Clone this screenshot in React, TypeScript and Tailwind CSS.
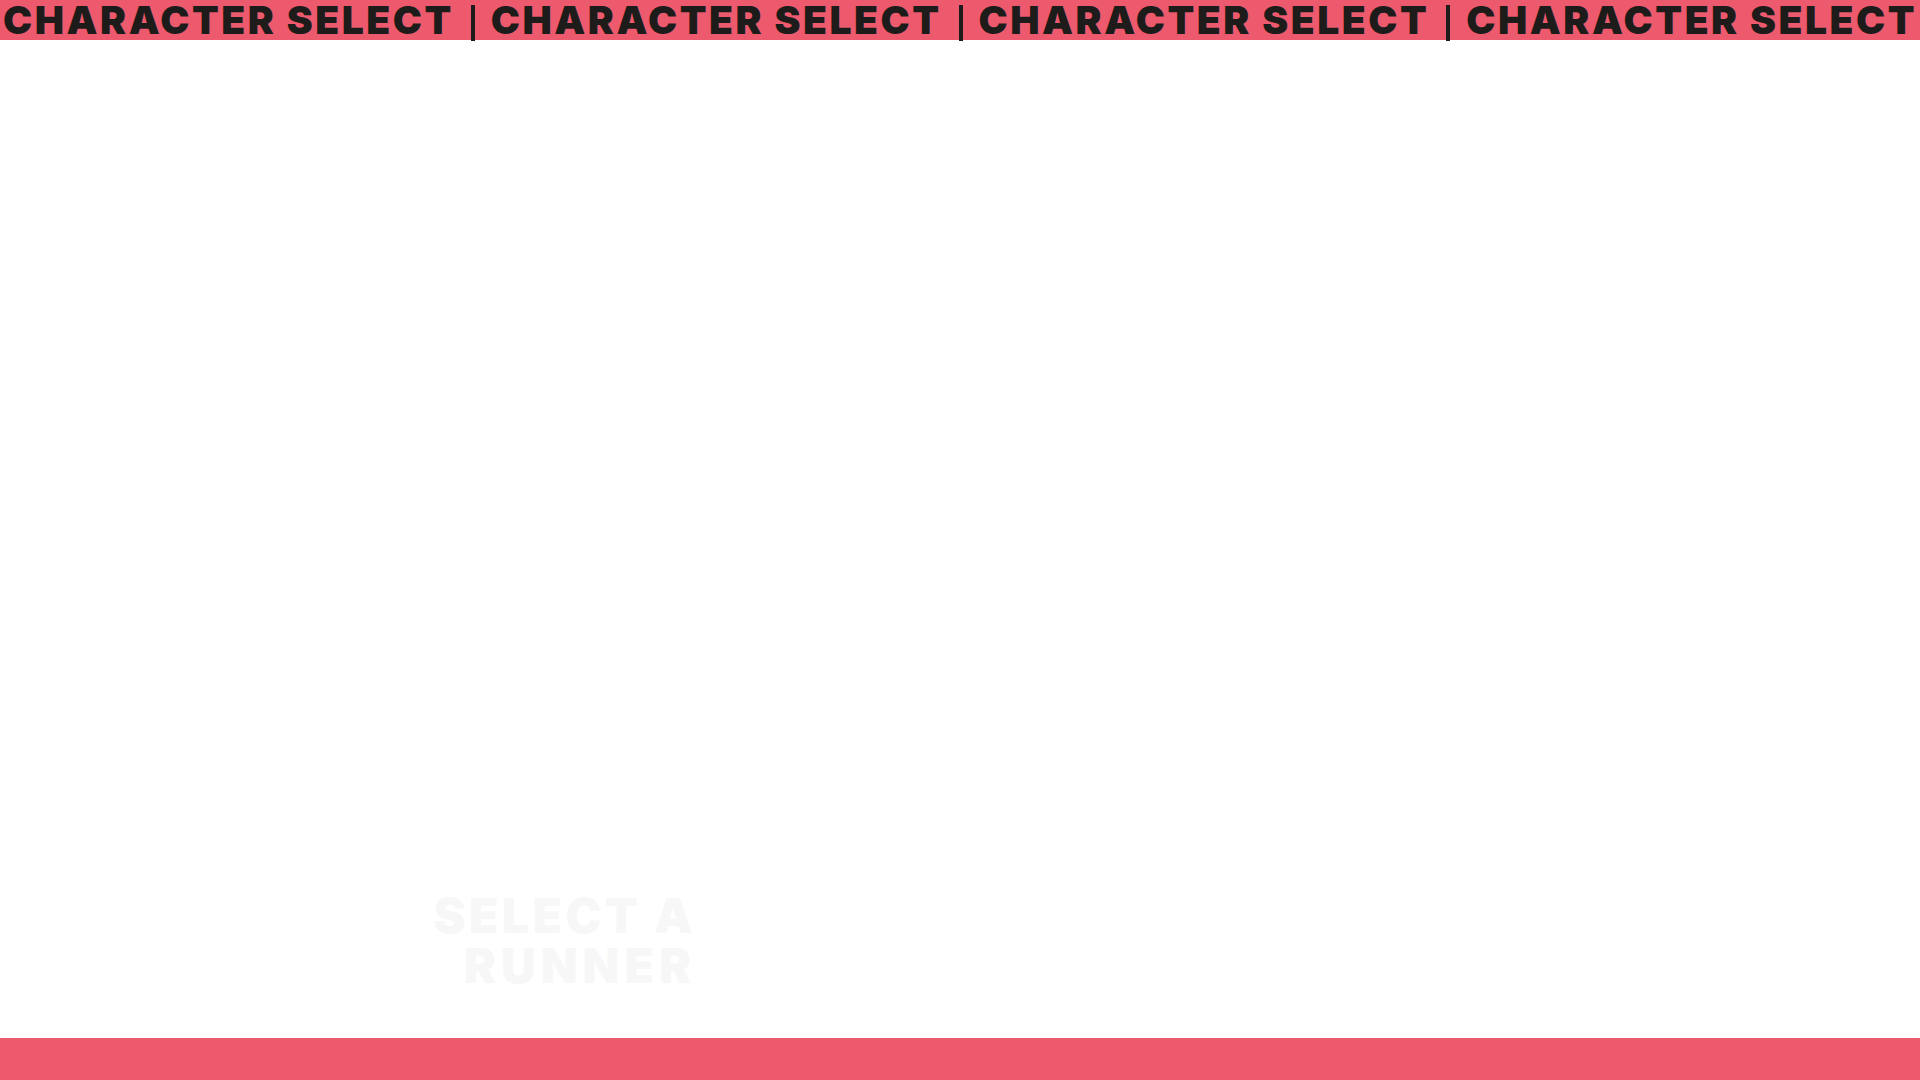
import React from 'react';

const TICKER = ['CHARACTER SELECT', 'CHARACTER SELECT', 'CHARACTER SELECT', 'CHARACTER SELECT', 'CHARACTER SELECT'];

export default function App() {
  return (
    <div className="flex h-screen w-full flex-col overflow-hidden bg-white" style={{ fontFamily: 'Inter, "Liberation Sans", sans-serif' }}>
      <div className="relative h-10 shrink-0 bg-[#ed5a6e]">
        <div className="absolute left-[3px] top-0 flex whitespace-nowrap text-[39px] font-black leading-[40px] tracking-[2.55px] text-[#1e1c1a]">
          {TICKER.map((t, i) => (
            <span key={i} className="flex items-start">
              {i > 0 && (
                <span className="ml-[17px] mr-[16px] mt-[5px] h-[36px] w-[4px] bg-[#1e1c1a]" />
              )}
              <span>{t}</span>
            </span>
          ))}
        </div>
      </div>

      <main className="flex flex-1 items-end">
        <div className="w-[696px] pb-[47px] text-right text-[48px] font-black leading-[50px] tracking-[3.5px] text-[#f7f7f7]">
          SELECT A<br />
          <span className="tracking-[5px]">RUNNER</span>
        </div>
      </main>

      <div className="h-[42px] shrink-0 bg-[#ed5a6e]" />
    </div>
  );
}
